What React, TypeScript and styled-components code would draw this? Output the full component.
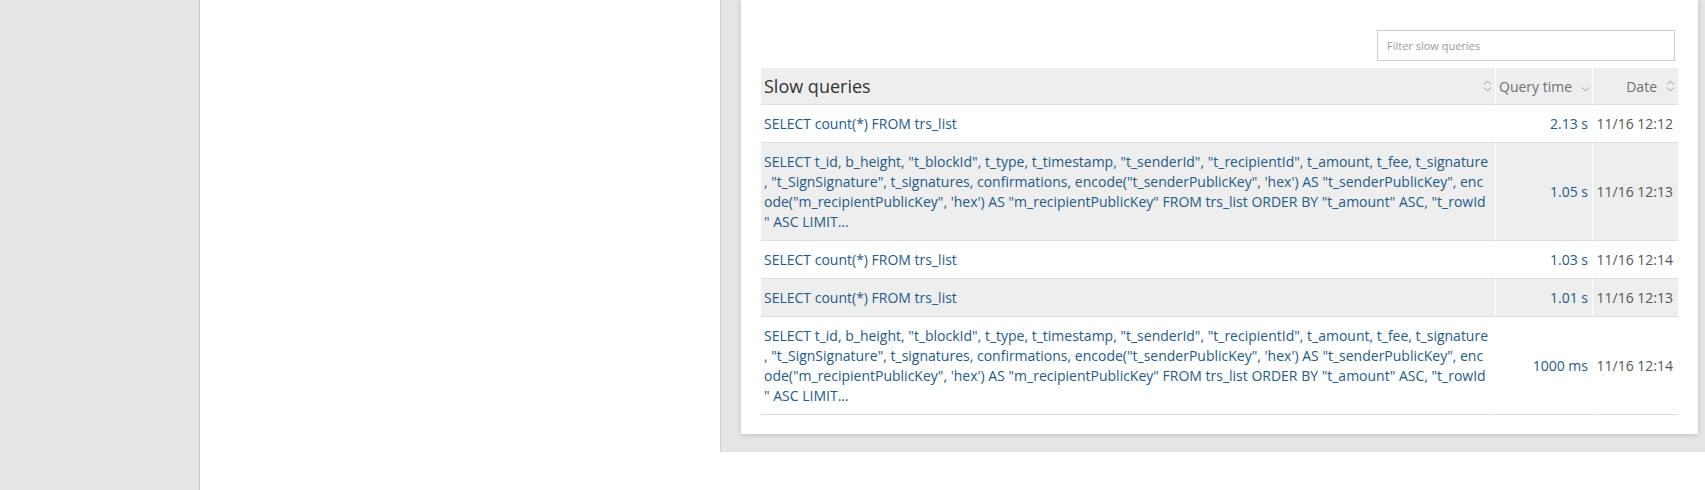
import React from "react";
import styled, { createGlobalStyle } from "styled-components";

const Global = createGlobalStyle`
  html, body { margin: 0; padding: 0; overflow: hidden; background: #fff; }
  body { font-family: "Open Sans", "Liberation Sans", sans-serif; }
  * { box-sizing: border-box; }
`;

const Page = styled.div`
  display: flex;
  height: 490px;
`;

const Sidebar = styled.aside`
  flex: none;
  width: 200px;
  background: #e6e6e6;
  border-right: 1px solid #c8c8c8;
`;

const Content = styled.main`
  flex: 1;
  min-width: 0;
  display: flex;
  align-items: flex-start;
  padding-left: 520px;
`;

const Frame = styled.section`
  flex: none;
  background: #e5e5e5;
  border-left: 1px solid #d0d0d0;
  padding: 0 20px 18px 20px;
`;

const Card = styled.div`
  width: 957px;
  background: #fff;
  padding: 30px 20px 19px;
  box-shadow: 0 1px 5px rgba(0, 0, 0, 0.16);
`;

const Toolbar = styled.div`
  display: flex;
  justify-content: flex-end;
  margin-bottom: 7px;
`;

const Filter = styled.input`
  width: 298px;
  height: 31px;
  margin-right: 3px;
  border: 1px solid #cccccc;
  padding: 0 9px;
  font-family: "Open Sans", "Liberation Sans", sans-serif;
  font-size: 11px;
  color: #333;
  outline: none;
  &::placeholder { color: #9a9a9a; }
`;

const Table = styled.table`
  width: 100%;
  table-layout: fixed;
  border-collapse: separate;
  border-spacing: 0;
`;

const HeadCell = styled.th<{ $last?: boolean }>`
  height: 37px;
  padding: 0 3px 0 3px;
  background: #eeeeee;
  border-bottom: 1px solid #dddddd;
  border-right: ${(p) => (p.$last ? "none" : "1px solid #ffffff")};
  font-weight: normal;
  text-align: left;
  vertical-align: middle;
`;

const HeadInner = styled.div<{ $align: "between" | "start" | "end" }>`
  display: flex;
  align-items: center;
  justify-content: ${(p) =>
    p.$align === "between" ? "space-between" : p.$align === "end" ? "flex-end" : "flex-start"};
  gap: 9px;
`;

const Title = styled.span`
  font-size: 18px;
  color: #333333;
`;

const ColLabel = styled.span`
  font-size: 14px;
  color: #6f6f6f;
  white-space: nowrap;
`;

const Row = styled.tr<{ $shade: boolean }>`
  background: ${(p) => (p.$shade ? "#eeeeee" : "#ffffff")};
`;

const Cell = styled.td<{ $kind: "query" | "time" | "date" }>`
  padding: 9px ${(p) => (p.$kind === "date" ? "5px" : p.$kind === "time" ? "4px" : "3px")} 8px 3px;
  border-bottom: 1px solid #dddddd;
  border-right: ${(p) => (p.$kind === "date" ? "none" : "1px solid #ffffff")};
  font-size: 14px;
  line-height: 20px;
  vertical-align: middle;
  text-align: ${(p) => (p.$kind === "query" ? "left" : "right")};
  white-space: nowrap;
  overflow: hidden;
  color: ${(p) => (p.$kind === "date" ? "#555555" : "#245b88")};
`;

const QueryLine = styled.span`
  display: block;
`;

const SortIcon = ({ mode }: { mode: "both" | "down" }) => (
  <svg width="9" height="14" viewBox="0 0 9 14" fill="none" stroke="#9a9a9a" strokeWidth="1" style={{ flex: "none" }}>
    {mode === "both" && <path d="M1 5.5 L4.5 2 L8 5.5" />}
    <path d="M1 8.5 L4.5 12 L8 8.5" />
  </svg>
);

// The long statement as the table wraps it (character-level wrapping)
const LONG = [
  'SELECT t_id, b_height, "t_blockId", t_type, t_timestamp, "t_senderId", "t_recipientId", t_amount, t_fee, t_signature',
  ', "t_SignSignature", t_signatures, confirmations, encode("t_senderPublicKey", \'hex\') AS "t_senderPublicKey", enc',
  'ode("m_recipientPublicKey", \'hex\') AS "m_recipientPublicKey" FROM trs_list ORDER BY "t_amount" ASC, "t_rowId',
  '" ASC LIMIT...',
];
const SHORT = ["SELECT count(*) FROM trs_list"];

const rows = [
  { q: SHORT, t: "2.13 s", d: "11/16 12:12" },
  { q: LONG, t: "1.05 s", d: "11/16 12:13" },
  { q: SHORT, t: "1.03 s", d: "11/16 12:14" },
  { q: SHORT, t: "1.01 s", d: "11/16 12:13" },
  { q: LONG, t: "1000 ms", d: "11/16 12:14" },
];

export default function App() {
  return (
    <>
      <Global />
      <Page>
        <Sidebar />
        <Content>
          <Frame>
            <Card>
              <Toolbar>
                <Filter placeholder="Filter slow queries" />
              </Toolbar>
              <Table>
                <colgroup>
                  <col style={{ width: 735 }} />
                  <col style={{ width: 97 }} />
                  <col style={{ width: 85 }} />
                </colgroup>
                <thead>
                  <tr>
                    <HeadCell>
                      <HeadInner $align="between">
                        <Title>Slow queries</Title>
                        <SortIcon mode="both" />
                      </HeadInner>
                    </HeadCell>
                    <HeadCell>
                      <HeadInner $align="between">
                        <ColLabel>Query time</ColLabel>
                        <SortIcon mode="down" />
                      </HeadInner>
                    </HeadCell>
                    <HeadCell $last>
                      <HeadInner $align="end">
                        <ColLabel>Date</ColLabel>
                        <SortIcon mode="both" />
                      </HeadInner>
                    </HeadCell>
                  </tr>
                </thead>
                <tbody>
                  {rows.map((r, i) => (
                    <Row key={i} $shade={i % 2 === 1}>
                      <Cell $kind="query">
                        {r.q.map((line, j) => (
                          <QueryLine key={j}>{line}</QueryLine>
                        ))}
                      </Cell>
                      <Cell $kind="time">{r.t}</Cell>
                      <Cell $kind="date">{r.d}</Cell>
                    </Row>
                  ))}
                </tbody>
              </Table>
            </Card>
          </Frame>
        </Content>
      </Page>
    </>
  );
}
